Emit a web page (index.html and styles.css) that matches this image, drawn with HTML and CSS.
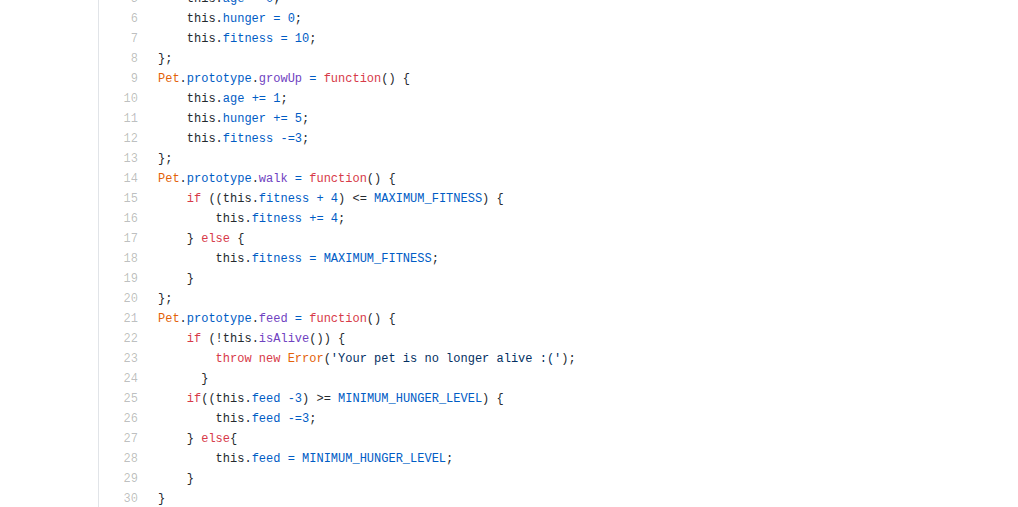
FILE: index.html
```html
<!DOCTYPE html>
<html>
<head>
<meta charset="utf-8">
<link rel="stylesheet" href="styles.css">
</head>
<body>
<div class="file">
<table class="blob">
<tr><td class="num">5</td><td class="code">    this.<span class="c1">age</span> <span class="c1">=</span> <span class="c1">0</span>;</td></tr>
<tr><td class="num">6</td><td class="code">    this.<span class="c1">hunger</span> <span class="c1">=</span> <span class="c1">0</span>;</td></tr>
<tr><td class="num">7</td><td class="code">    this.<span class="c1">fitness</span> <span class="c1">=</span> <span class="c1">10</span>;</td></tr>
<tr><td class="num">8</td><td class="code">};</td></tr>
<tr><td class="num">9</td><td class="code"><span class="v">Pet</span>.<span class="c1">prototype</span>.<span class="en">growUp</span> <span class="c1">=</span> <span class="k">function</span>() {</td></tr>
<tr><td class="num">10</td><td class="code">    this.<span class="c1">age</span> <span class="c1">+=</span> <span class="c1">1</span>;</td></tr>
<tr><td class="num">11</td><td class="code">    this.<span class="c1">hunger</span> <span class="c1">+=</span> <span class="c1">5</span>;</td></tr>
<tr><td class="num">12</td><td class="code">    this.<span class="c1">fitness</span> <span class="c1">-=3</span>;</td></tr>
<tr><td class="num">13</td><td class="code">};</td></tr>
<tr><td class="num">14</td><td class="code"><span class="v">Pet</span>.<span class="c1">prototype</span>.<span class="en">walk</span> <span class="c1">=</span> <span class="k">function</span>() {</td></tr>
<tr><td class="num">15</td><td class="code">    <span class="k">if</span> ((this.<span class="c1">fitness</span> <span class="c1">+</span> <span class="c1">4</span>) &lt;= <span class="c1">MAXIMUM_FITNESS</span>) {</td></tr>
<tr><td class="num">16</td><td class="code">        this.<span class="c1">fitness</span> <span class="c1">+=</span> <span class="c1">4</span>;</td></tr>
<tr><td class="num">17</td><td class="code">    } <span class="k">else</span> {</td></tr>
<tr><td class="num">18</td><td class="code">        this.<span class="c1">fitness</span> <span class="c1">=</span> <span class="c1">MAXIMUM_FITNESS</span>;</td></tr>
<tr><td class="num">19</td><td class="code">    }</td></tr>
<tr><td class="num">20</td><td class="code">};</td></tr>
<tr><td class="num">21</td><td class="code"><span class="v">Pet</span>.<span class="c1">prototype</span>.<span class="en">feed</span> <span class="c1">=</span> <span class="k">function</span>() {</td></tr>
<tr><td class="num">22</td><td class="code">    <span class="k">if</span> (!this.<span class="en">isAlive</span>()) {</td></tr>
<tr><td class="num">23</td><td class="code">        <span class="k">throw</span> <span class="k">new</span> <span class="v">Error</span>(<span class="s">'Your pet is no longer alive :('</span>);</td></tr>
<tr><td class="num">24</td><td class="code">      }</td></tr>
<tr><td class="num">25</td><td class="code">    <span class="k">if</span>((this.<span class="c1">feed</span> <span class="c1">-3</span>) &gt;= <span class="c1">MINIMUM_HUNGER_LEVEL</span>) {</td></tr>
<tr><td class="num">26</td><td class="code">        this.<span class="c1">feed</span> <span class="c1">-=3</span>;</td></tr>
<tr><td class="num">27</td><td class="code">    } <span class="k">else</span>{</td></tr>
<tr><td class="num">28</td><td class="code">        this.<span class="c1">feed</span> <span class="c1">=</span> <span class="c1">MINIMUM_HUNGER_LEVEL</span>;</td></tr>
<tr><td class="num">29</td><td class="code">    }</td></tr>
<tr><td class="num">30</td><td class="code">}</td></tr>
</table>
</div>
</body>
</html>
```

FILE: styles.css
```css
html, body {
  margin: 0;
  padding: 0;
  background: #fff;
}
.file {
  margin-left: 98px;
  margin-top: -11px;
  border-left: 1px solid #e1e4e8;
  min-height: 540px;
}
.blob {
  border-collapse: collapse;
  border-spacing: 0;
  font-family: "Liberation Mono", "DejaVu Sans Mono", monospace;
  font-size: 12px;
  color: #24292e;
}
.blob td {
  padding: 0;
  height: 20px;
  line-height: 20px;
  vertical-align: top;
}
.blob .num {
  width: 39px;
  padding-right: 10px;
  text-align: right;
  color: rgba(27, 31, 35, 0.3);
}
.blob .code {
  padding-left: 10px;
  white-space: pre;
}
.c1 { color: #005cc5; }
.k { color: #d73a49; }
.en { color: #6f42c1; }
.v { color: #e36209; }
.s { color: #032f62; }
```
